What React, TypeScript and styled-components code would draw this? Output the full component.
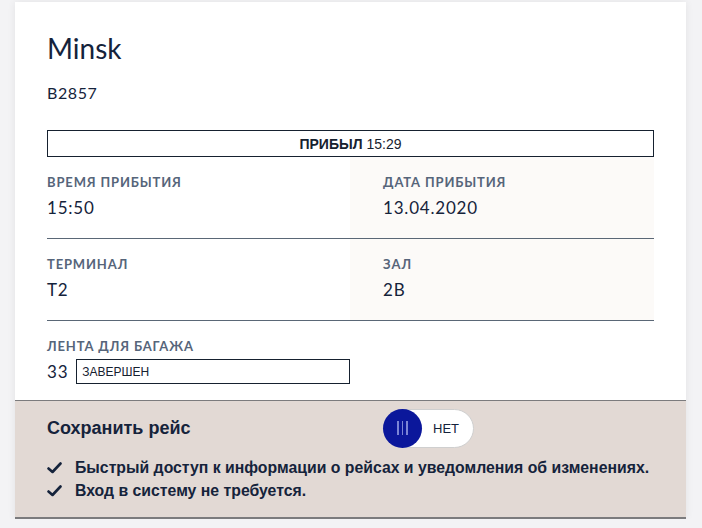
import React from "react";
import styled, { createGlobalStyle } from "styled-components";

const GlobalStyle = createGlobalStyle`
  html, body { margin: 0; padding: 0; background: #f3f3f5; }
  * { box-sizing: border-box; }
`;

const Page = styled.div`
  padding: 2px 16px 0 15px;
  width: 702px;
`;

const Card = styled.div`
  width: 671px;
  background: #ffffff;
  box-shadow: 0 0 8px rgba(0, 0, 0, 0.07);
`;

const Body = styled.div`
  padding: 29px 32px 0;
`;

const Title = styled.h1`
  margin: 0;
  font-family: Lato, "Noto Sans", sans-serif;
  font-weight: 400;
  font-size: 28px;
  line-height: 34px;
  color: #15233b;
`;

const Code = styled.div`
  margin-top: 18px;
  font-family: Lato, "Noto Sans", sans-serif;
  font-size: 16px;
  line-height: 20px;
  letter-spacing: 0.6px;
  color: #15233b;
`;

const Status = styled.div`
  margin-top: 27px;
  height: 27px;
  border: 1px solid #16212f;
  display: flex;
  align-items: center;
  justify-content: center;
  font-family: "Liberation Sans", Arial, sans-serif;
  font-size: 14px;
  color: #16212f;
  b { font-weight: 700; margin-right: 4px; }
`;

const Grid = styled.div`
  display: grid;
  grid-template-columns: 303px 304px;
`;

const Cell = styled.div<{ $shaded?: boolean; $line?: boolean }>`
  padding: 17px 0 ${(p) => (p.$line ? "19px" : "16px")} ${(p) => (p.$shaded ? "33px" : "0")};
  background: ${(p) => (p.$shaded ? "#fcfaf8" : "transparent")};
  border-bottom: ${(p) => (p.$line ? "1px solid #5a6776" : "none")};
`;

const Label = styled.div`
  font-family: Lato, "Noto Sans", sans-serif;
  font-weight: 700;
  font-size: 13px;
  line-height: 16px;
  letter-spacing: 0.85px;
  color: #56657a;
  text-transform: uppercase;
`;

const Value = styled.div`
  margin-top: 7px;
  font-family: Lato, "Noto Sans", sans-serif;
  font-size: 17px;
  line-height: 22px;
  letter-spacing: 0.8px;
  color: #15233b;
`;

const BeltRow = styled.div`
  display: flex;
  align-items: center;
  gap: 8px;
  margin-top: 5px;
`;

const BeltNumber = styled(Value).attrs({ as: "span" })`
  margin-top: 0;
`;

const BeltBox = styled.div`
  width: 274px;
  height: 25px;
  border: 1px solid #16212f;
  padding-left: 5px;
  display: flex;
  align-items: center;
  font-family: "Liberation Sans", Arial, sans-serif;
  font-size: 12px;
  color: #16212f;
`;

const Footer = styled.div`
  background: #e2d9d4;
  border-top: 1px solid #7b7b7d;
  border-bottom: 2px solid #7b7b7d;
  padding: 8px 32px 15px;
`;

const SaveRow = styled.div`
  display: grid;
  grid-template-columns: 336px auto;
  align-items: center;
`;

const SaveTitle = styled.div`
  font-family: "Liberation Sans", Arial, sans-serif;
  font-weight: 700;
  font-size: 18px;
  color: #15233b;
`;

const Toggle = styled.div`
  width: 91px;
  height: 39px;
  border-radius: 20px;
  background: #ffffff;
  border: 1px solid #cfcfcf;
  display: flex;
  align-items: center;
`;

const Knob = styled.div`
  width: 39px;
  height: 39px;
  margin: -1px 0 0 -1px;
  border-radius: 50%;
  background: #0b179b;
  display: flex;
  align-items: center;
  justify-content: center;
  gap: 3px;
  span {
    display: block;
    width: 1.5px;
    height: 14px;
    background: #7c85d6;
  }
`;

const ToggleText = styled.span`
  margin-left: 11px;
  font-family: "Liberation Sans", Arial, sans-serif;
  font-size: 13px;
  color: #15233b;
`;

const List = styled.ul`
  list-style: none;
  margin: 8px 0 0;
  padding: 0;
`;

const Item = styled.li`
  display: flex;
  align-items: center;
  gap: 13px;
  height: 23px;
  white-space: nowrap;
  font-family: "Liberation Sans", Arial, sans-serif;
  font-weight: 700;
  font-size: 15.8px;
  color: #15233b;
`;

const Check = () => (
  <svg width="15" height="12" viewBox="0 0 15 12">
    <path d="M1.5 6.5 L5.5 10 L13.5 1.5" fill="none" stroke="#15233b" strokeWidth="2.6" strokeLinecap="round" strokeLinejoin="round" />
  </svg>
);

export default function App() {
  return (
    <>
      <GlobalStyle />
      <Page>
        <Card>
          <Body>
            <Title>Minsk</Title>
            <Code>B2857</Code>
            <Status>
              <b>ПРИБЫЛ</b> 15:29
            </Status>
            <Grid>
              <Cell $line>
                <Label>Время прибытия</Label>
                <Value>15:50</Value>
              </Cell>
              <Cell $line $shaded>
                <Label>Дата прибытия</Label>
                <Value>13.04.2020</Value>
              </Cell>
              <Cell $line>
                <Label>Терминал</Label>
                <Value>T2</Value>
              </Cell>
              <Cell $line $shaded>
                <Label>Зал</Label>
                <Value>2B</Value>
              </Cell>
            </Grid>
            <Cell>
              <Label>Лента для багажа</Label>
              <BeltRow>
                <BeltNumber>33</BeltNumber>
                <BeltBox>ЗАВЕРШЕН</BeltBox>
              </BeltRow>
            </Cell>
          </Body>
          <Footer>
            <SaveRow>
              <SaveTitle>Сохранить рейс</SaveTitle>
              <Toggle>
                <Knob>
                  <span />
                  <span />
                  <span />
                </Knob>
                <ToggleText>НЕТ</ToggleText>
              </Toggle>
            </SaveRow>
            <List>
              <Item>
                <Check />
                Быстрый доступ к информации о рейсах и уведомления об изменениях.
              </Item>
              <Item>
                <Check />
                Вход в систему не требуется.
              </Item>
            </List>
          </Footer>
        </Card>
      </Page>
    </>
  );
}
